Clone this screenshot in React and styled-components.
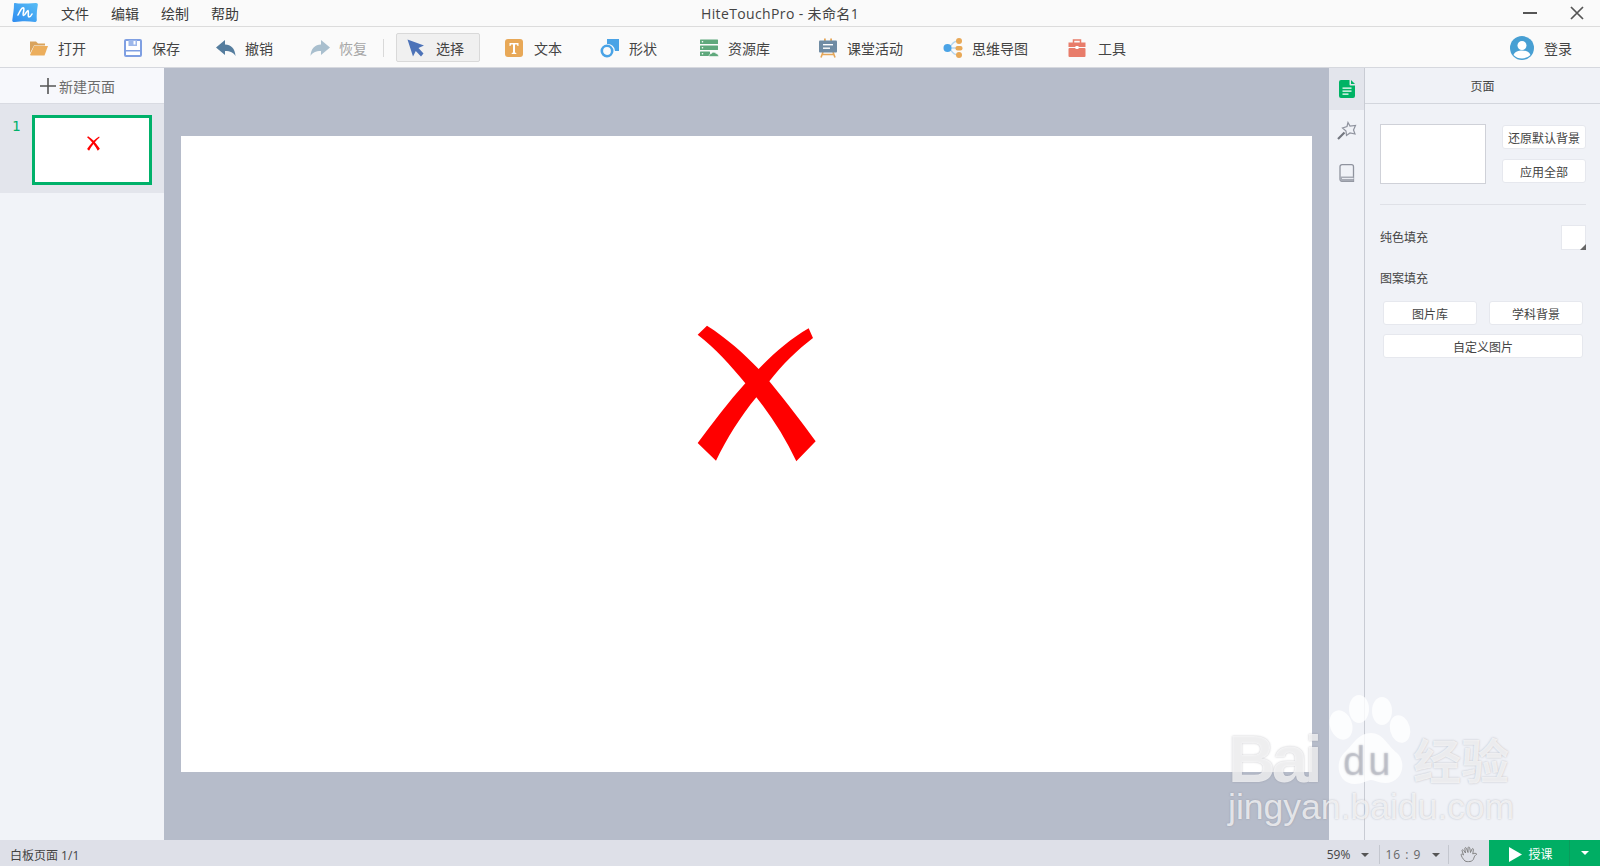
import React from "react";
import styled, { createGlobalStyle } from "styled-components";

const GlobalStyle = createGlobalStyle`
  html, body {
    margin: 0;
    padding: 0;
    overflow: hidden;
  }
  body {
    font-family: "Liberation Sans", "Noto Sans CJK SC", sans-serif;
    color: #444;
  }
`;

const menus = ["文件", "编辑", "绘制", "帮助"];

const UndoSvg = styled.svg`
  transform: ${(p) => (p.$flip ? "scaleX(-1)" : "none")};
`;

const FolderIcon = () => (
  <svg width="20" height="18" viewBox="0 0 20 18">
    <path d="M1 2.500h6l2 2h7v2H5L1 14z" fill="#d9a35c" />
    <path d="M1 16l4-9h14l-3.500 9.500H2z" fill="#ecae5c" />
  </svg>
);
const SaveIcon = () => (
  <svg width="18" height="18" viewBox="0 0 18 18">
    <rect x="1" y="1" width="16" height="16" rx="1" fill="#fff" stroke="#7f9fe2" strokeWidth="2" />
    <rect x="4.500" y="1" width="8.500" height="6" fill="#9db7ea" />
    <rect x="9.500" y="2" width="2" height="3.500" fill="#fff" />
    <rect x="1" y="11" width="16" height="1.500" fill="#7f9fe2" />
  </svg>
);
const UndoIcon = ({ color = "#557d9e", flip }) => (
  <UndoSvg width="20" height="18" viewBox="0 0 20 18" $flip={flip}>
    <path d="M0 8.500L9 1v4.500c6 0 10 4 10.500 11.500-2-3.500-5-5-10.500-5V16z" fill={color} />
  </UndoSvg>
);
const ArrowIcon = () => (
  <svg width="18" height="18" viewBox="0 0 18 18">
    <path d="M0.500 0.500L17 6.500l-5.500 2.500 5 5.500-2.500 3-5.200-5.500L6 17.500z" fill="#4d73b8" />
  </svg>
);
const TextIcon = () => (
  <svg width="18" height="18" viewBox="0 0 18 18">
    <rect width="18" height="18" rx="3" fill="#e8a857" />
    <path d="M4.500 4h9v3h-1l-.5-1.600H10v8.200l1.300.4v1H6.700v-1l1.300-.4V5.400H6L5.500 7h-1z" fill="#fff" />
  </svg>
);
const ShapeIcon = () => (
  <svg width="20" height="20" viewBox="0 0 20 20">
    <path d="M7 1h12v12h-4A7 7 0 0 0 7 6z" fill="#4aa3e6" />
    <circle cx="7" cy="13" r="5.200" fill="none" stroke="#4aa3e6" strokeWidth="2.600" />
  </svg>
);
const LibraryIcon = () => (
  <svg width="20" height="18" viewBox="0 0 20 18">
    <rect x="1" y="0.500" width="18" height="4.500" rx="0.500" fill="#5fa87c" />
    <rect x="1" y="6.500" width="18" height="4.500" rx="0.500" fill="#5fa87c" />
    <rect x="1" y="12.500" width="10" height="4.500" rx="0.500" fill="#5fa87c" />
    <circle cx="3.500" cy="2.700" r="0.800" fill="#fff" />
    <circle cx="3.500" cy="8.700" r="0.800" fill="#fff" />
    <circle cx="3.500" cy="14.700" r="0.800" fill="#fff" />
    <path d="M10 17.500c0-2 1.300-3 2.500-3 .6-1.500 3.800-1.600 4.500 0 1.500 0 2.500 1.200 2.500 3z" fill="#5fa87c" stroke="#fafafa" strokeWidth="0.600" />
  </svg>
);
const BoardIcon = () => (
  <svg width="20" height="20" viewBox="0 0 20 20">
    <path d="M5 14l-2 5.500M15 14l2 5.500M4 16.500h12" stroke="#e5a658" strokeWidth="1.600" fill="none" />
    <rect x="6" y="0.500" width="1.800" height="3" fill="#e5a658" />
    <rect x="12.200" y="0.500" width="1.800" height="3" fill="#e5a658" />
    <rect x="1" y="2.500" width="18" height="12" rx="1" fill="#6f8ba3" />
    <rect x="5" y="6" width="10" height="1.400" fill="#fff" />
    <rect x="5" y="9.500" width="7" height="1.400" fill="#fff" />
  </svg>
);
const MindIcon = () => (
  <svg width="20" height="20" viewBox="0 0 20 20">
    <path d="M5 10C9 9 8 3.500 15 3M5 10h10M5 10c4 1 3 6.500 10 7" stroke="#b4d5ef" strokeWidth="1.300" fill="none" />
    <circle cx="4.500" cy="10" r="4" fill="#4aa3e6" />
    <circle cx="16" cy="3" r="3" fill="#e8a857" />
    <rect x="12.500" y="8" width="7" height="4.500" rx="2" fill="#e8a857" />
    <circle cx="16" cy="17" r="3" fill="#e8a857" />
  </svg>
);
const ToolboxIcon = () => (
  <svg width="18" height="20" viewBox="0 0 18 20">
    <path d="M5.500 5V2h7v3" fill="none" stroke="#e87c6a" strokeWidth="1.500" />
    <rect x="0.500" y="4.500" width="17" height="4.500" fill="#e87c6a" />
    <rect x="0.500" y="10" width="17" height="9" rx="1" fill="#e87c6a" />
    <rect x="7.500" y="8" width="3" height="3" fill="#fff" />
  </svg>
);
const UserIcon = () => (
  <svg width="24" height="24" viewBox="0 0 24 24">
    <circle cx="12" cy="12" r="12" fill="#479fd3" />
    <circle cx="12" cy="9.500" r="4.500" fill="#fff" />
    <path d="M3.500 19c1.500-3.500 5-4.500 8.500-4.500s7 1 8.500 4.500A12 12 0 0 1 12 22.500 12 12 0 0 1 3.500 19z" fill="#fff" />
  </svg>
);
const PageIcon = () => (
  <svg width="16" height="18" viewBox="0 0 16 18">
    <path d="M2 0h8.500v4.500a1 1 0 0 0 1 1H16V16a2 2 0 0 1-2 2H2a2 2 0 0 1-2-2V2a2 2 0 0 1 2-2zM12 0l4 4h-4z" fill="#00b365" />
    <path d="M3.500 7.500h9v1.300h-9zM3.500 10.500h9v1.300h-9zM3.500 13.500h6v1.300h-6z" fill="#fff" />
  </svg>
);
const WandIcon = () => (
  <svg width="20" height="20" viewBox="0 0 20 20">
    <path d="M11 1.500l2 3.500 5.500-.5-2 4.500 1.500 4-5-1-3.500 2.500-.5-4.500-3.500-3 4.500-1.500z" fill="none" stroke="#8f939e" strokeWidth="1.200" />
    <path d="M7.500 11.500L1 18" stroke="#72767f" strokeWidth="2.200" />
  </svg>
);
const BookIcon = () => (
  <svg width="16" height="18" viewBox="0 0 16 18">
    <path d="M3 .7h9.500a2 2 0 0 1 2 2v14.600H3a2 2 0 0 1-2-2V2.700a2 2 0 0 1 2-2z" fill="none" stroke="#8f939e" strokeWidth="1.300" />
    <path d="M1 12.500h13.500v4.800H3a2 2 0 0 1-2-2z" fill="#a7abb5" />
    <path d="M3 14.500h11.500" stroke="#e9ebf1" strokeWidth="1" />
  </svg>
);
const HandIcon = () => (
  <svg width="18" height="17" viewBox="0 0 18 17">
    <path d="M5 15C3 13 1 10 1.200 8.500c.3-1 1.500-.5 2.300.5L2 4.500c0-1 1.200-1 1.800 0L5.500 7 4.800 2.500c0-1 1.300-1.200 1.700 0L8 6.500 8 1.800c.2-1 1.400-1 1.700 0L10.500 6.500 12 3c.5-.8 1.500-.5 1.400.5L12.800 8c1.500-1 3-1 4 .2-1.500.8-2.500 2-3 4-.5 2-1.800 3-3.800 3.300-2 .2-3.800.2-5-.5z" fill="none" stroke="#7a7a7a" strokeWidth="0.900" />
  </svg>
);
const LogoIcon = () => (
  <svg width="26" height="22" viewBox="0 0 26 22">
    <defs>
      <linearGradient id="logoFill" x1="0" y1="1" x2="1" y2="0">
        <stop offset="0" stopColor="#2f8cf0" />
        <stop offset="1" stopColor="#58bdf5" />
      </linearGradient>
    </defs>
    <path d="M3 1c5 1 11 .5 21 0 1.500 0 2 1 1.800 2-1 5-1.300 10-1 15 0 1.500-1 2-2 2-6-1-12-1.300-20 0-1.500.2-2.800-.5-2.500-2C1 13 2 7 2 2c0-.7.300-1 1-1z" fill="url(#logoFill)" />
    <path d="M6 13C8 9 10 5 11.500 6S10 13 11.500 13.500 15 8 16 8.500 15.500 15 17 15s2.500-2 3-3" fill="none" stroke="#fff" strokeWidth="1.600" strokeLinecap="round" strokeLinejoin="round" />
  </svg>
);

const CrossMark = () => (
  <svg width="100%" height="100%" viewBox="0 0 360 410">
    <path
      d="M2 29L30 2C90 40 140 85 185 132 230 85 280 42 335 10L348 39C300 75 255 120 217 169 275 240 320 300 356 349L298 409C265 340 225 275 178 217 130 275 90 340 57 407L2 354C50 290 95 230 145 175 100 120 55 70 2 29z"
      fill="#ff0000"
    />
  </svg>
);

const Shell = styled.div`
  width: 1600px;
  height: 866px;
  display: flex;
  flex-direction: column;
  position: relative;
  overflow: hidden;
`;

const TitleBar = styled.div`
  height: 26px;
  flex: none;
  display: flex;
  align-items: center;
  position: relative;
  background: #fafafa;
  border-bottom: 1px solid #dcdcdc;
`;

const LogoSlot = styled.div`
  width: 26px;
  height: 22px;
  margin: 0 23px 0 12px;
`;

const MenuItem = styled.span`
  font-size: 14px;
  width: 50px;
  color: #3c3c3c;
  padding-bottom: 1px;
`;

const WindowTitle = styled.div`
  position: absolute;
  left: 701px;
  top: 5px;
  font-family: "Open Sans", "Noto Sans CJK SC", sans-serif;
  font-size: 14px;
  line-height: 18px;
  letter-spacing: 0.37px;
  color: #444;
  white-space: nowrap;
`;

const WindowControls = styled.div`
  margin-left: auto;
  display: flex;
  align-items: center;
  gap: 33px;
  padding-right: 16px;
`;

const Toolbar = styled.div`
  height: 41px;
  box-sizing: border-box;
  flex: none;
  display: flex;
  align-items: center;
  padding: 1px 0 0 29px;
  background: #fafafa;
  border-bottom: 1px solid #d6d8de;
`;

const ToolItem = styled.div`
  display: flex;
  align-items: center;
  gap: ${(p) => p.$gap || 9}px;
  margin-left: ${(p) => p.$ml || 0}px;
  font-size: 14px;
  white-space: nowrap;
  color: ${(p) => (p.$muted ? "#a6a6a6" : "#444")};
  ${(p) =>
    p.$selected &&
    `
    width: 84px;
    height: 29px;
    box-sizing: border-box;
    padding-left: 10px;
    background: #f0f0f0;
    border: 1px solid #d9d9d9;
    border-radius: 2px;
  `}
`;

const IconSlot = styled.span`
  width: ${(p) => p.$w || 20}px;
  display: flex;
  justify-content: center;
  flex: none;
`;

const ToolDivider = styled.div`
  width: 1px;
  height: 18px;
  background: #d9d9d9;
  margin-left: 16px;
`;

const Main = styled.div`
  flex: 1;
  min-height: 0;
  display: flex;
`;

const LeftPanel = styled.div`
  width: 164px;
  flex: none;
  background: #f1f3f8;
  display: flex;
  flex-direction: column;
`;

const NewPage = styled.div`
  height: 36px;
  box-sizing: border-box;
  display: flex;
  align-items: center;
  justify-content: center;
  gap: 3px;
  background: #f7f8fc;
  border-bottom: 1px solid #d9dbe2;
  font-size: 14px;
  color: #6b6b6b;
  padding-right: 9px;
`;

const SlideRow = styled.div`
  height: 89px;
  box-sizing: border-box;
  background: #e3e5ec;
  padding: 11px 0 0 12px;
  display: flex;
  gap: 12px;
`;

const SlideNumber = styled.span`
  font-family: "DejaVu Sans Mono", monospace;
  font-size: 14px;
  line-height: 22px;
  width: 8px;
  color: #00b16a;
`;

const Thumb = styled.div`
  width: 120px;
  height: 70px;
  box-sizing: border-box;
  background: #fff;
  border: 3px solid #00b16a;
  position: relative;
`;

const ThumbMark = styled.div`
  position: absolute;
  left: 52px;
  top: 18px;
  width: 13px;
  height: 15px;
`;

const Workspace = styled.div`
  flex: 1;
  background: #b6bcca;
  display: flex;
  align-items: center;
  justify-content: center;
`;

const Canvas = styled.div`
  width: 1131px;
  height: 636px;
  background: #fff;
  position: relative;
`;

const CanvasMark = styled.div`
  position: absolute;
  left: 516px;
  top: 189px;
  width: 120px;
  height: 136.700px;
`;

const SideTabs = styled.div`
  width: 36px;
  box-sizing: border-box;
  flex: none;
  background: #f0f2f7;
  display: flex;
  flex-direction: column;
  border-right: 1px solid #c9ccd4;
`;

const SideTab = styled.div`
  height: ${(p) => p.$h || 42}px;
  display: flex;
  align-items: center;
  justify-content: center;
  background: ${(p) => (p.$active ? "#e3e5ec" : "transparent")};
`;

const RightPanel = styled.div`
  width: 235px;
  flex: none;
  background: #f0f2f7;
  display: flex;
  flex-direction: column;
`;

const PanelHeader = styled.div`
  height: 36px;
  box-sizing: border-box;
  display: flex;
  align-items: center;
  justify-content: center;
  font-size: 12px;
  color: #444;
  border-bottom: 1px solid #d3d6dd;
`;

const PanelBody = styled.div`
  padding: 20px 14px 0 15px;
  display: flex;
  flex-direction: column;
`;

const BackgroundRow = styled.div`
  display: flex;
  justify-content: space-between;
  padding-bottom: 20px;
  border-bottom: 1px solid #dfe1e7;
`;

const Preview = styled.div`
  width: 106px;
  height: 60px;
  box-sizing: border-box;
  background: #fff;
  border: 1px solid #cfd1d8;
`;

const BackgroundActions = styled.div`
  display: flex;
  flex-direction: column;
  gap: 10px;
  padding-top: 1px;
`;

const PanelButton = styled.div`
  width: ${(p) => p.$w || 84}px;
  height: ${(p) => p.$h || 24}px;
  box-sizing: border-box;
  display: flex;
  align-items: center;
  justify-content: center;
  background: #fff;
  border: 1px solid #e6e8ee;
  border-radius: 3px;
  font-size: 12px;
  color: #444;
`;

const FillRow = styled.div`
  display: flex;
  align-items: center;
  justify-content: space-between;
  margin-top: 20px;
  height: 25px;
`;

const FillLabel = styled.div`
  font-size: 12px;
  line-height: 16px;
  color: #444;
  margin-top: ${(p) => p.$mt || 0}px;
`;

const Swatch = styled.div`
  width: 25px;
  height: 25px;
  box-sizing: border-box;
  background: #fff;
  border: 1px solid #e6e8ee;
  position: relative;
  &::after {
    content: "";
    position: absolute;
    right: -1px;
    bottom: -1px;
    border-style: solid;
    border-width: 0 0 6px 6px;
    border-color: transparent transparent #666 transparent;
  }
`;

const PatternGrid = styled.div`
  display: grid;
  grid-template-columns: 94px 94px;
  column-gap: 12px;
  row-gap: 9px;
  margin: 14px 0 0 3px;
`;

const WideCell = styled.div`
  grid-column: 1 / 3;
`;

const StatusBar = styled.div`
  height: 26px;
  box-sizing: border-box;
  flex: none;
  display: flex;
  align-items: center;
  background: #dee0e8;
  padding-left: 10px;
  font-family: "Open Sans", "Noto Sans CJK SC", sans-serif;
  font-size: 12px;
  color: #444;
`;

const StatusText = styled.span`
  padding-top: 4px;
`;

const StatusRight = styled.div`
  margin-left: auto;
  display: flex;
  align-items: center;
  height: 100%;
`;

const StatusCell = styled.div`
  display: flex;
  align-items: center;
  justify-content: center;
  gap: 11px;
  width: ${(p) => p.$w}px;
  height: 100%;
  box-sizing: border-box;
  padding: 3px ${(p) => p.$pr || 0}px 0 0;
  position: relative;
  color: ${(p) => p.$color || "#444"};
  letter-spacing: ${(p) => p.$spacing || 0}px;
  &::after {
    content: ${(p) => (p.$rule ? '""' : "none")};
    position: absolute;
    right: 0;
    top: 5px;
    bottom: 2px;
    width: 1px;
    background: #c4c7cf;
  }
`;

const Caret = styled.span`
  width: 0;
  height: 0;
  border-left: 4px solid transparent;
  border-right: 4px solid transparent;
  border-top: 4px solid ${(p) => p.$color || "#555"};
`;

const TeachButton = styled.div`
  width: 111px;
  height: 100%;
  background: #00ae64;
  display: flex;
  align-items: center;
  color: #fff;
  font-size: 12px;
`;

const TeachLabel = styled.div`
  width: 80px;
  display: flex;
  align-items: center;
  justify-content: center;
  gap: 6px;
  padding: 2px 0 0 4px;
  box-sizing: border-box;
`;

const TeachMenu = styled.div`
  flex: 1;
  height: 100%;
  display: flex;
  align-items: center;
  justify-content: center;
  border-left: 1px solid #0a9c5c;
`;

const Watermark = styled.div`
  position: absolute;
  left: 1228px;
  top: 695px;
  width: 300px;
  height: 135px;
  color: rgba(255, 255, 255, 0.72);
  pointer-events: none;
  text-shadow: 0 0 2px rgba(120, 120, 130, 0.45);
`;

const WatermarkWord = styled.span`
  position: absolute;
  left: ${(p) => p.$left}px;
  top: ${(p) => p.$top}px;
  font-size: ${(p) => p.$size}px;
  line-height: ${(p) => p.$lh || 1};
  font-weight: ${(p) => p.$weight || 400};
  letter-spacing: ${(p) => p.$spacing || 0}px;
  color: ${(p) => p.$color || "inherit"};
  white-space: nowrap;
`;

const WatermarkPaw = styled.svg`
  position: absolute;
  left: 98px;
  top: 0;
`;

const tools = [
  { icon: <FolderIcon />, label: "打开" },
  { icon: <SaveIcon />, label: "保存", ml: 37 },
  { icon: <UndoIcon />, label: "撤销", ml: 36 },
  { icon: <UndoIcon color="#a9bfce" flip />, label: "恢复", ml: 37, muted: true },
];

const tools2 = [
  { icon: <TextIcon />, label: "文本", ml: 24, gap: 10 },
  { icon: <ShapeIcon />, label: "形状", ml: 38 },
  { icon: <LibraryIcon />, label: "资源库", ml: 42 },
  { icon: <BoardIcon />, label: "课堂活动", ml: 48 },
  { icon: <MindIcon />, label: "思维导图", ml: 40 },
  { icon: <ToolboxIcon />, label: "工具", ml: 39, gap: 11 },
];

const App = () => {
  return (
    <Shell>
      <GlobalStyle />
      <TitleBar>
        <LogoSlot>
          <LogoIcon />
        </LogoSlot>
        {menus.map((menu) => (
          <MenuItem key={menu}>{menu}</MenuItem>
        ))}
        <WindowTitle>HiteTouchPro - 未命名1</WindowTitle>
        <WindowControls>
          <svg width="14" height="14" viewBox="0 0 14 14">
            <rect y="6" width="14" height="2" fill="#555" />
          </svg>
          <svg width="14" height="14" viewBox="0 0 14 14">
            <path d="M1 1l12 12M13 1L1 13" stroke="#555" strokeWidth="1.700" />
          </svg>
        </WindowControls>
      </TitleBar>

      <Toolbar>
        {tools.map((tool) => (
          <ToolItem key={tool.label} $ml={tool.ml} $muted={tool.muted}>
            <IconSlot>{tool.icon}</IconSlot>
            {tool.label}
          </ToolItem>
        ))}
        <ToolDivider />
        <ToolItem $selected $ml={12} $gap={11}>
          <IconSlot $w={18}>
            <ArrowIcon />
          </IconSlot>
          选择
        </ToolItem>
        {tools2.map((tool) => (
          <ToolItem key={tool.label} $ml={tool.ml} $gap={tool.gap}>
            <IconSlot>{tool.icon}</IconSlot>
            {tool.label}
          </ToolItem>
        ))}
        <ToolItem $ml={384} $gap={10}>
          <IconSlot $w={24}>
            <UserIcon />
          </IconSlot>
          登录
        </ToolItem>
      </Toolbar>

      <Main>
        <LeftPanel>
          <NewPage>
            <svg width="16" height="16" viewBox="0 0 16 16">
              <path d="M8 0v16M0 8h16" stroke="#555" strokeWidth="1.600" />
            </svg>
            新建页面
          </NewPage>
          <SlideRow>
            <SlideNumber>1</SlideNumber>
            <Thumb>
              <ThumbMark>
                <CrossMark />
              </ThumbMark>
            </Thumb>
          </SlideRow>
        </LeftPanel>

        <Workspace>
          <Canvas>
            <CanvasMark>
              <CrossMark />
            </CanvasMark>
          </Canvas>
        </Workspace>

        <SideTabs>
          <SideTab $active>
            <PageIcon />
          </SideTab>
          <SideTab>
            <WandIcon />
          </SideTab>
          <SideTab>
            <BookIcon />
          </SideTab>
        </SideTabs>

        <RightPanel>
          <PanelHeader>页面</PanelHeader>
          <PanelBody>
            <BackgroundRow>
              <Preview />
              <BackgroundActions>
                <PanelButton>还原默认背景</PanelButton>
                <PanelButton>应用全部</PanelButton>
              </BackgroundActions>
            </BackgroundRow>
            <FillRow>
              <FillLabel>纯色填充</FillLabel>
              <Swatch />
            </FillRow>
            <FillLabel $mt={21}>图案填充</FillLabel>
            <PatternGrid>
              <PanelButton $w={94}>图片库</PanelButton>
              <PanelButton $w={94}>学科背景</PanelButton>
              <WideCell>
                <PanelButton $w={200}>自定义图片</PanelButton>
              </WideCell>
            </PatternGrid>
          </PanelBody>
        </RightPanel>
      </Main>

      <StatusBar>
        <StatusText>白板页面 1/1</StatusText>
        <StatusRight>
          <StatusCell $w={60} $pr={4} $rule>
            59%
            <Caret />
          </StatusCell>
          <StatusCell $w={69} $pr={3} $rule $color="#666" $spacing={1}>
            16 : 9
            <Caret />
          </StatusCell>
          <StatusCell $w={40}>
            <HandIcon />
          </StatusCell>
          <TeachButton>
            <TeachLabel>
              <svg width="13" height="15" viewBox="0 0 13 15">
                <path d="M0 0l13 7.500L0 15z" fill="#fff" />
              </svg>
              授课
            </TeachLabel>
            <TeachMenu>
              <Caret $color="#fff" />
            </TeachMenu>
          </TeachButton>
        </StatusRight>
      </StatusBar>

      <Watermark>
        <WatermarkWord $left={0} $top={35} $size={66} $lh={0.9} $weight={700} $spacing={-4}>
          Bai
        </WatermarkWord>
        <WatermarkPaw width="90" height="92" viewBox="0 0 90 92">
          <ellipse cx="15" cy="30" rx="11" ry="15" fill="rgba(255,255,255,0.8)" transform="rotate(-20 15 30)" />
          <ellipse cx="33" cy="14" rx="10" ry="14" fill="rgba(255,255,255,0.8)" />
          <ellipse cx="56" cy="16" rx="10" ry="14" fill="rgba(255,255,255,0.8)" />
          <ellipse cx="74" cy="34" rx="10" ry="14" fill="rgba(255,255,255,0.8)" transform="rotate(-15 74 34)" />
          <path d="M45 38c12 0 16 12 26 20 10 9 6 30-12 30-7 0-10-3-14-3s-8 4-16 4C12 89 8 68 18 58c9-8 14-20 27-20z" fill="rgba(255,255,255,0.8)" />
        </WatermarkPaw>
        <WatermarkWord $left={115} $top={46} $size={40} $spacing={3} $color="rgba(170,175,190,0.35)">
          du
        </WatermarkWord>
        <WatermarkWord $left={185} $top={44} $size={48} $weight={700}>
          经验
        </WatermarkWord>
        <WatermarkWord $left={0} $top={95} $size={35.500}>
          jingyan.baidu.com
        </WatermarkWord>
      </Watermark>
    </Shell>
  );
};

export default App;
